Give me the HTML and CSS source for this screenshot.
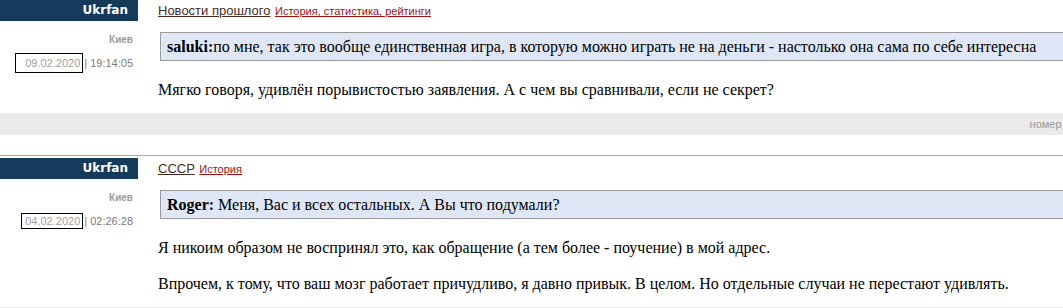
FILE: index.html
```html
<!DOCTYPE html>
<html lang="ru">
<head>
<meta charset="utf-8">
<title>Форум</title>
<link rel="stylesheet" href="styles.css">
</head>
<body>
<div class="page">
  <div class="post">
    <div class="post-row">
      <aside class="author">
        <div class="author-name">Ukrfan</div>
        <div class="author-city">Киев</div>
        <div class="author-date"><span class="date date-wide">09.02.2020</span><span class="time">| 19:14:05</span></div>
      </aside>
      <div class="post-body">
        <div class="topic"><a href="#" class="topic-main">Новости прошлого</a> <a href="#" class="topic-sub">История, статистика, рейтинги</a></div>
        <div class="quote"><b>saluki:</b>по мне, так это вообще единственная игра, в которую можно играть не на деньги - настолько она сама по себе интересна</div>
        <p class="text">Мягко говоря, удивлён порывистостью заявления. А с чем вы сравнивали, если не секрет?</p>
      </div>
    </div>
    <div class="post-foot"><span class="foot-label">номер сообщения</span></div>
  </div>
  <hr class="sep">
  <div class="post">
    <div class="post-row">
      <aside class="author">
        <div class="author-name">Ukrfan</div>
        <div class="author-city">Киев</div>
        <div class="author-date"><span class="date date-narrow">04.02.2020</span><span class="time">| 02:26:28</span></div>
      </aside>
      <div class="post-body">
        <div class="topic"><a href="#" class="topic-main">СССР</a> <a href="#" class="topic-sub">История</a></div>
        <div class="quote"><b>Roger:</b> Меня, Вас и всех остальных. А Вы что подумали?</div>
        <p class="text">Я никоим образом не воспринял это, как обращение (а тем более - поучение) в мой адрес.</p>
        <p class="text">Впрочем, к тому, что ваш мозг работает причудливо, я давно привык. В целом. Но отдельные случаи не перестают удивлять.</p>
      </div>
    </div>
    <div class="post-foot"><span class="foot-label">номер сообщения</span></div>
  </div>
</div>
</body>
</html>
```

FILE: styles.css
```css
html, body {
  margin: 0;
  padding: 0;
  overflow: hidden;
  background: #ffffff;
}

.page {
  width: 1130px;
  font-family: "Liberation Serif", "Times New Roman", serif;
  color: #000;
}

.post-row {
  display: flex;
  align-items: flex-start;
}

.author {
  width: 138px;
  flex: none;
  text-align: right;
  font-family: "Liberation Sans", Arial, sans-serif;
}

.author-name {
  height: 21px;
  line-height: 21px;
  background: #143a5c;
  color: #ffffff;
  font-family: "DejaVu Sans", Tahoma, sans-serif;
  font-weight: bold;
  font-size: 12px;
  padding-right: 10px;
}

.author-city {
  margin-top: 12px;
  padding-right: 5px;
  font-size: 10px;
  font-weight: bold;
  line-height: 14px;
  color: #9a9a9a;
}

.author-date {
  margin-top: 9px;
  padding-right: 5px;
  font-size: 11px;
  line-height: 14px;
  color: #7a7a7a;
}

.date {
  color: #a0a0a0;
  border: 1px solid #000;
}

.date-wide {
  padding: 3px 2px 3px 9px;
}

.date-narrow {
  padding: 1px 2px 1px 3px;
}

.time {
  margin-left: 1px;
}

.post-body {
  flex: 1;
  margin-left: 20px;
  padding-top: 2px;
}

.topic {
  line-height: 15px;
  font-family: "Liberation Sans", Arial, sans-serif;
}

.topic-main {
  font-size: 13px;
  color: #4a2a20;
}

.topic-sub {
  font-size: 11px;
  color: #a01010;
}

.quote {
  margin: 13px 0 0 2px;
  padding: 4px 6px;
  line-height: 19px;
  font-size: 16px;
  background: #dfe7f7;
  border: 1px solid #9a9a9a;
  white-space: nowrap;
}

.text {
  margin: 19px 0 13px 0;
  font-size: 16px;
  line-height: 20px;
}

.text + .text {
  margin-top: 16px;
}

.post-foot {
  height: 22px;
  background: #ebebeb;
  display: flex;
  align-items: center;
  justify-content: flex-end;
  padding-right: 8px;
}

.foot-label {
  font-family: "Liberation Sans", Arial, sans-serif;
  font-size: 11px;
  color: #999;
}

.sep {
  margin: 20px 0 2px 0;
  border: 0;
  height: 1px;
  background: #a8a8a8;
}
```
